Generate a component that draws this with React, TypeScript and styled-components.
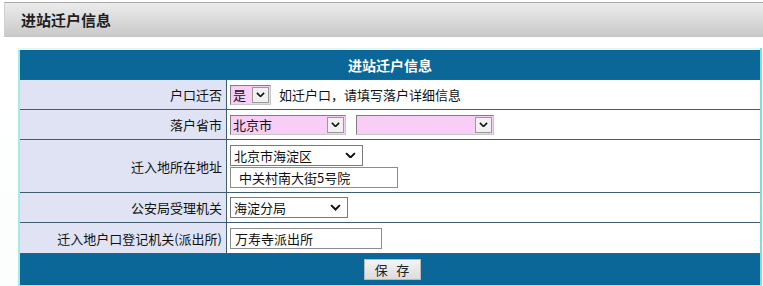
import React from 'react';
import styled, { createGlobalStyle } from 'styled-components';

const GlobalStyle = createGlobalStyle`
  body {
    margin: 0;
    background: #ffffff;
    font-family: "Noto Sans CJK SC", "Liberation Sans", sans-serif;
  }
`;

const Chevron = ({ size = 9 }: { size?: number }) => (
  <svg width={size} height={size * 0.6} viewBox="0 0 10 6">
    <path d="M1 1 L5 5 L9 1" fill="none" stroke="#111" strokeWidth="1.8" />
  </svg>
);

const App = () => {
  return (
    <Page>
      <GlobalStyle />
      <TitleBar>进站迁户信息</TitleBar>
      <Content>
        <FormTable>
          <tbody>
            <tr>
              <HeadCell colSpan={2}>进站迁户信息</HeadCell>
            </tr>
            <Row $height={30}>
              <Label>户口迁否</Label>
              <Value>
                <Inline>
                  <ClassicSelect $width={41} $pink>
                    <span>是</span>
                    <ArrowBox>
                      <Chevron size={9} />
                    </ArrowBox>
                  </ClassicSelect>
                  <Hint>如迁户口，请填写落户详细信息</Hint>
                </Inline>
              </Value>
            </Row>
            <Row $height={30}>
              <Label>落户省市</Label>
              <Value>
                <Inline $gap={10}>
                  <ClassicSelect $width={116} $pink>
                    <span>北京市</span>
                    <ArrowBox>
                      <Chevron size={9} />
                    </ArrowBox>
                  </ClassicSelect>
                  <ClassicSelect $width={138} $pink>
                    <span />
                    <ArrowBox>
                      <Chevron size={9} />
                    </ArrowBox>
                  </ClassicSelect>
                </Inline>
              </Value>
            </Row>
            <Row $height={53}>
              <Label>迁入地所在地址</Label>
              <Value>
                <Stack>
                  <ModernSelect $width={133}>
                    <span>北京市海淀区</span>
                    <Chevron size={11} />
                  </ModernSelect>
                  <TextBox $width={168} $indent={8}>中关村南大街5号院</TextBox>
                </Stack>
              </Value>
            </Row>
            <Row $height={30}>
              <Label>公安局受理机关</Label>
              <Value>
                <ModernSelect $width={118}>
                  <span>海淀分局</span>
                  <Chevron size={11} />
                </ModernSelect>
              </Value>
            </Row>
            <Row $height={31}>
              <Label>迁入地户口登记机关(派出所)</Label>
              <Value>
                <TextBox $width={152} $indent={4}>万寿寺派出所</TextBox>
              </Value>
            </Row>
            <tr>
              <FootCell colSpan={2}>
                <SaveButton type="button">保&nbsp;&nbsp;&nbsp;存</SaveButton>
              </FootCell>
            </tr>
          </tbody>
        </FormTable>
      </Content>
    </Page>
  );
};

export default App;

const Page = styled.div`
  width: 763px;
  height: 286px;
  overflow: hidden;
  padding-top: 2px;
  box-sizing: border-box;
`;

const TitleBar = styled.div`
  margin-left: 4px;
  height: 35px;
  box-sizing: border-box;
  border-top: 1px solid #a9a9a9;
  border-left: 1px solid #d0d0d0;
  border-bottom: 1px solid #c4c4c4;
  background: linear-gradient(#ececec, #d9d9d9 55%, #c9c9c9);
  padding: 6px 0 0 16px;
  font-size: 15px;
  font-weight: bold;
  color: #1e1e1e;
  line-height: 22px;
`;

const Content = styled.div`
  padding: 11px 0 0 18px;
  background: linear-gradient(#ffffff, #fbfefd);
`;

const FormTable = styled.table`
  width: 744px;
  border-collapse: collapse;
  border: 2px solid #a6e8e2;
  border-right-color: #7fdcdc;
  border-top-color: #e4f7f2;
  font-size: 13px;
  color: #111111;
`;

const HeadCell = styled.td`
  height: 29px;
  padding: 0;
  background: #0b6797;
  color: #ffffff;
  font-size: 14px;
  font-weight: bold;
  text-align: center;
  border-bottom: 1px solid #3b5d70;
`;

const Row = styled.tr<{ $height: number }>`
  height: ${(p) => p.$height}px;
  td {
    border-bottom: 1px solid #3f5d6e;
  }
`;

const Label = styled.td`
  width: 202px;
  padding: 0 4px 0 0;
  background: #dfe3f4;
  text-align: right;
  white-space: nowrap;
  border-right: 1px solid #3f5d6e;
`;

const Value = styled.td`
  padding: 0 0 0 3px;
  background: #ffffff;
`;

const Inline = styled.div<{ $gap?: number }>`
  display: flex;
  align-items: center;
  gap: ${(p) => p.$gap ?? 8}px;
`;

const Stack = styled.div`
  display: flex;
  flex-direction: column;
  gap: 1px;
`;

const Hint = styled.span`
  color: #111;
`;

const ClassicSelect = styled.div<{ $width: number; $pink?: boolean }>`
  width: ${(p) => p.$width}px;
  height: 20px;
  box-sizing: border-box;
  display: flex;
  align-items: center;
  justify-content: space-between;
  border: 1px solid #7f7f7f;
  border-right-color: #c8c8c8;
  border-bottom-color: #c8c8c8;
  background: ${(p) => (p.$pink ? '#f8cdf6' : '#ffffff')};
  padding-left: 2px;
  color: #101010;
  font-size: 13px;
  line-height: 18px;
`;

const ArrowBox = styled.span`
  width: 17px;
  height: 16px;
  margin-right: 1px;
  box-sizing: border-box;
  display: flex;
  align-items: center;
  justify-content: center;
  background: #f0f0f0;
  border: 1px solid #9a9a9a;
`;

const ModernSelect = styled.div<{ $width: number }>`
  width: ${(p) => p.$width}px;
  height: 21px;
  box-sizing: border-box;
  display: flex;
  align-items: center;
  justify-content: space-between;
  border: 1px solid #7a7a7a;
  background: #ffffff;
  padding: 0 6px 0 3px;
  color: #101010;
  font-size: 13px;
`;

const TextBox = styled.div<{ $width: number; $indent: number }>`
  width: ${(p) => p.$width}px;
  height: 21px;
  box-sizing: border-box;
  border: 1px solid #8c8c8c;
  background: #ffffff;
  padding-left: ${(p) => p.$indent}px;
  color: #101010;
  font-size: 13px;
  line-height: 19px;
`;

const FootCell = styled.td`
  height: 31px;
  padding: 0;
  background: #0b6797;
  text-align: center;
`;

const SaveButton = styled.button`
  width: 57px;
  height: 21px;
  margin-left: 4px;
  padding: 0;
  border: 1px solid #b8b8b8;
  background: linear-gradient(#f4f4f4, #dcdcdc);
  font-family: "Noto Sans CJK SC", "Liberation Sans", sans-serif;
  font-size: 13px;
  color: #222;
  line-height: 19px;
`;
